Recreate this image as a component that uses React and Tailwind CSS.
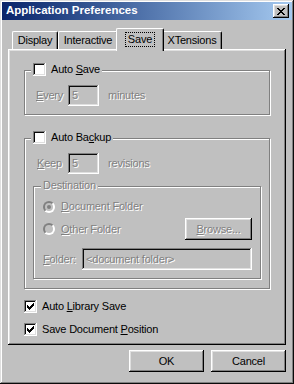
import React from 'react'

// pixel rows -> svg path
const pix = (rows) =>
  rows
    .flatMap((r, y) => [...r].map((c, x) => (c === 'x' ? `M${x} ${y}h1v1h-1z` : '')))
    .join('')

const CLOSE = pix(['xx....xx', '.xx..xx.', '..xxxx..', '...xx...', '..xxxx..', '.xx..xx.', 'xx....xx'])
const TICK = pix(['......x', '.....xx', 'x...xxx', 'xx.xxx.', 'xxxxx..', '.xxx...', '..x....'])

const raised =
  'shadow-[inset_-1px_-1px_#000,inset_1px_1px_#fff,inset_-2px_-2px_#808080,inset_2px_2px_#dfdfdf]'
const sunken =
  'shadow-[inset_-1px_-1px_#fff,inset_1px_1px_#808080,inset_-2px_-2px_#dfdfdf,inset_2px_2px_#0a0a0a]'
const etched = 'border border-[#808080] shadow-[inset_1px_1px_#fff,1px_1px_#fff]'
const dim = 'text-[#808080] [text-shadow:1px_1px_0_#fff]'

function Check({ checked }) {
  return (
    <span className={`w-[13px] h-[13px] bg-white ${sunken} flex items-center justify-center shrink-0`}>
      {checked && (
        <svg width="7" height="7" viewBox="0 0 7 7">
          <path d={TICK} fill="#000" />
        </svg>
      )}
    </span>
  )
}

function Radio({ checked }) {
  return (
    <span className="w-[12px] h-[12px] rounded-full border-2 border-t-[#808080] border-l-[#808080] border-r-white border-b-white bg-[#c0c0c0] flex items-center justify-center shrink-0">
      {checked && <span className="w-[4px] h-[4px] rounded-full bg-[#808080]" />}
    </span>
  )
}

function Field({ value, className = '' }) {
  return (
    <div className={`h-[21px] bg-[#c0c0c0] ${sunken} flex items-center px-[4px] ${dim} ${className}`}>
      {value}
    </div>
  )
}

function Button({ children, className = '' }) {
  return (
    <button className={`h-[22px] bg-[#c0c0c0] ${raised} flex items-center justify-center ${className}`}>
      {children}
    </button>
  )
}

const U = ({ children }) => <u className="underline decoration-1 underline-offset-[1px]">{children}</u>

function Tab({ label, selected, className = '' }) {
  if (selected) {
    return (
      <div className="relative z-10 -mx-[2px] -mb-[2px] h-[23px] w-[48px] bg-[#c0c0c0] border-t border-l border-white rounded-tl-[2px] rounded-tr-[2px] border-r border-r-black shadow-[inset_-1px_0_#808080] flex justify-center pt-[3px]">
        <span className="h-[15px] px-[2px] border border-dotted border-black flex items-center">{label}</span>
      </div>
    )
  }
  return (
    <div className={`h-[18px] bg-[#c0c0c0] border-t border-l border-white rounded-tl-[2px] rounded-tr-[2px] border-r border-r-black shadow-[inset_-1px_0_#808080] flex items-center justify-center ${className}`}>
      {label}
    </div>
  )
}

export default function App() {
  return (
    <div className="w-[294px] h-[384px] bg-[#c0c0c0] p-[2px] shadow-[inset_-1px_-1px_#0a0a0a,inset_1px_1px_#dfdfdf,inset_-2px_-2px_#808080,inset_2px_2px_#fff] flex flex-col font-['Liberation_Sans',Arial,sans-serif] text-[11px] tracking-[-0.2px] text-black select-none">
      {/* title bar */}
      <div className="h-[18px] bg-gradient-to-r from-[#0a246a] to-[#a6caf0] flex items-center pl-[4px] pr-[3px]">
        <span className="text-white font-bold text-[11.5px] tracking-normal">Application Preferences</span>
        <button className={`ml-auto w-[16px] h-[14px] bg-[#c0c0c0] ${raised} flex items-center justify-center`}>
          <svg width="8" height="7" viewBox="0 0 8 7">
            <path d={CLOSE} fill="#000" />
          </svg>
        </button>
      </div>

      <div className="flex flex-col px-[6px] pt-[8px]">
        {/* tabs */}
        <div className="flex items-end pl-[4px]">
          <Tab label="Display" className="w-[46px]" />
          <Tab label="Interactive" className="w-[60px]" />
          <Tab label="Save" selected />
          <Tab label="XTensions" className="w-[60px]" />
        </div>

        {/* panel */}
        <div className="bg-[#c0c0c0] shadow-[inset_-1px_-1px_#000,inset_1px_1px_#fff,inset_-2px_-2px_#808080,inset_2px_2px_#dfdfdf] pt-[21px] px-[16px] pb-[9px] flex flex-col">
          {/* Auto Save */}
          <div className={`${etched} pb-[8px]`}>
            <div className="-mt-[8px] ml-[6px] flex">
              <span className="bg-[#c0c0c0] px-[2px] h-[13px] flex items-center gap-[5px]">
                <Check />
                <span>
                  Auto <U>S</U>ave
                </span>
              </span>
            </div>
            <div className="mt-[9px] ml-[11px] flex items-center">
              <span className={`w-[32px] ${dim}`}>
                <U>E</U>very
              </span>
              <Field value="5" className="w-[31px]" />
              <span className={`ml-[9px] ${dim}`}>minutes</span>
            </div>
          </div>

          {/* Auto Backup */}
          <div className={`${etched} mt-[23px] pb-[9px]`}>
            <div className="-mt-[8px] ml-[6px] flex">
              <span className="bg-[#c0c0c0] px-[2px] h-[13px] flex items-center gap-[5px]">
                <Check />
                <span>
                  Auto Ba<U>c</U>kup
                </span>
              </span>
            </div>
            <div className="mt-[9px] ml-[12px] flex items-center">
              <span className={`w-[31px] ${dim}`}>
                <U>K</U>eep
              </span>
              <Field value="5" className="w-[31px]" />
              <span className={`ml-[9px] ${dim}`}>revisions</span>
            </div>

            {/* Destination */}
            <div className={`${etched} mt-[12px] mx-[8px] pb-[8px] pr-[8px]`}>
              <div className="-mt-[8px] ml-[7px] flex">
                <span className={`bg-[#c0c0c0] px-[2px] h-[13px] flex items-center ${dim}`}>Destination</span>
              </div>
              <div className="mt-[8px] ml-[9px] h-[13px] flex items-center gap-[6px]">
                <Radio checked />
                <span className={dim}>
                  <U>D</U>ocument Folder
                </span>
              </div>
              <div className="mt-[5px] ml-[9px] h-[22px] flex items-center gap-[6px]">
                <Radio />
                <span className={dim}>
                  <U>O</U>ther Folder
                </span>
                <Button className={`ml-auto w-[67px] ${dim}`}>
                  <span>
                    <U>B</U>rowse...
                  </span>
                </Button>
              </div>
              <div className="mt-[8px] ml-[9px] flex items-center">
                <span className={`w-[39px] ${dim}`}>
                  <U>F</U>older:
                </span>
                <Field value="<document folder>" className="flex-1 h-[22px]" />
              </div>
            </div>
          </div>

          {/* bottom checks */}
          <div className="mt-[11px] h-[13px] flex items-center gap-[5px]">
            <Check checked />
            <span>
              Auto <U>L</U>ibrary Save
            </span>
          </div>
          <div className="mt-[10px] h-[13px] flex items-center gap-[5px]">
            <Check checked />
            <span>
              Save Document <U>P</U>osition
            </span>
          </div>
        </div>

        {/* buttons */}
        <div className="mt-[5px] flex justify-end gap-[7px]">
          <Button className="w-[75px]">OK</Button>
          <Button className="w-[75px]">Cancel</Button>
        </div>
      </div>
    </div>
  )
}
